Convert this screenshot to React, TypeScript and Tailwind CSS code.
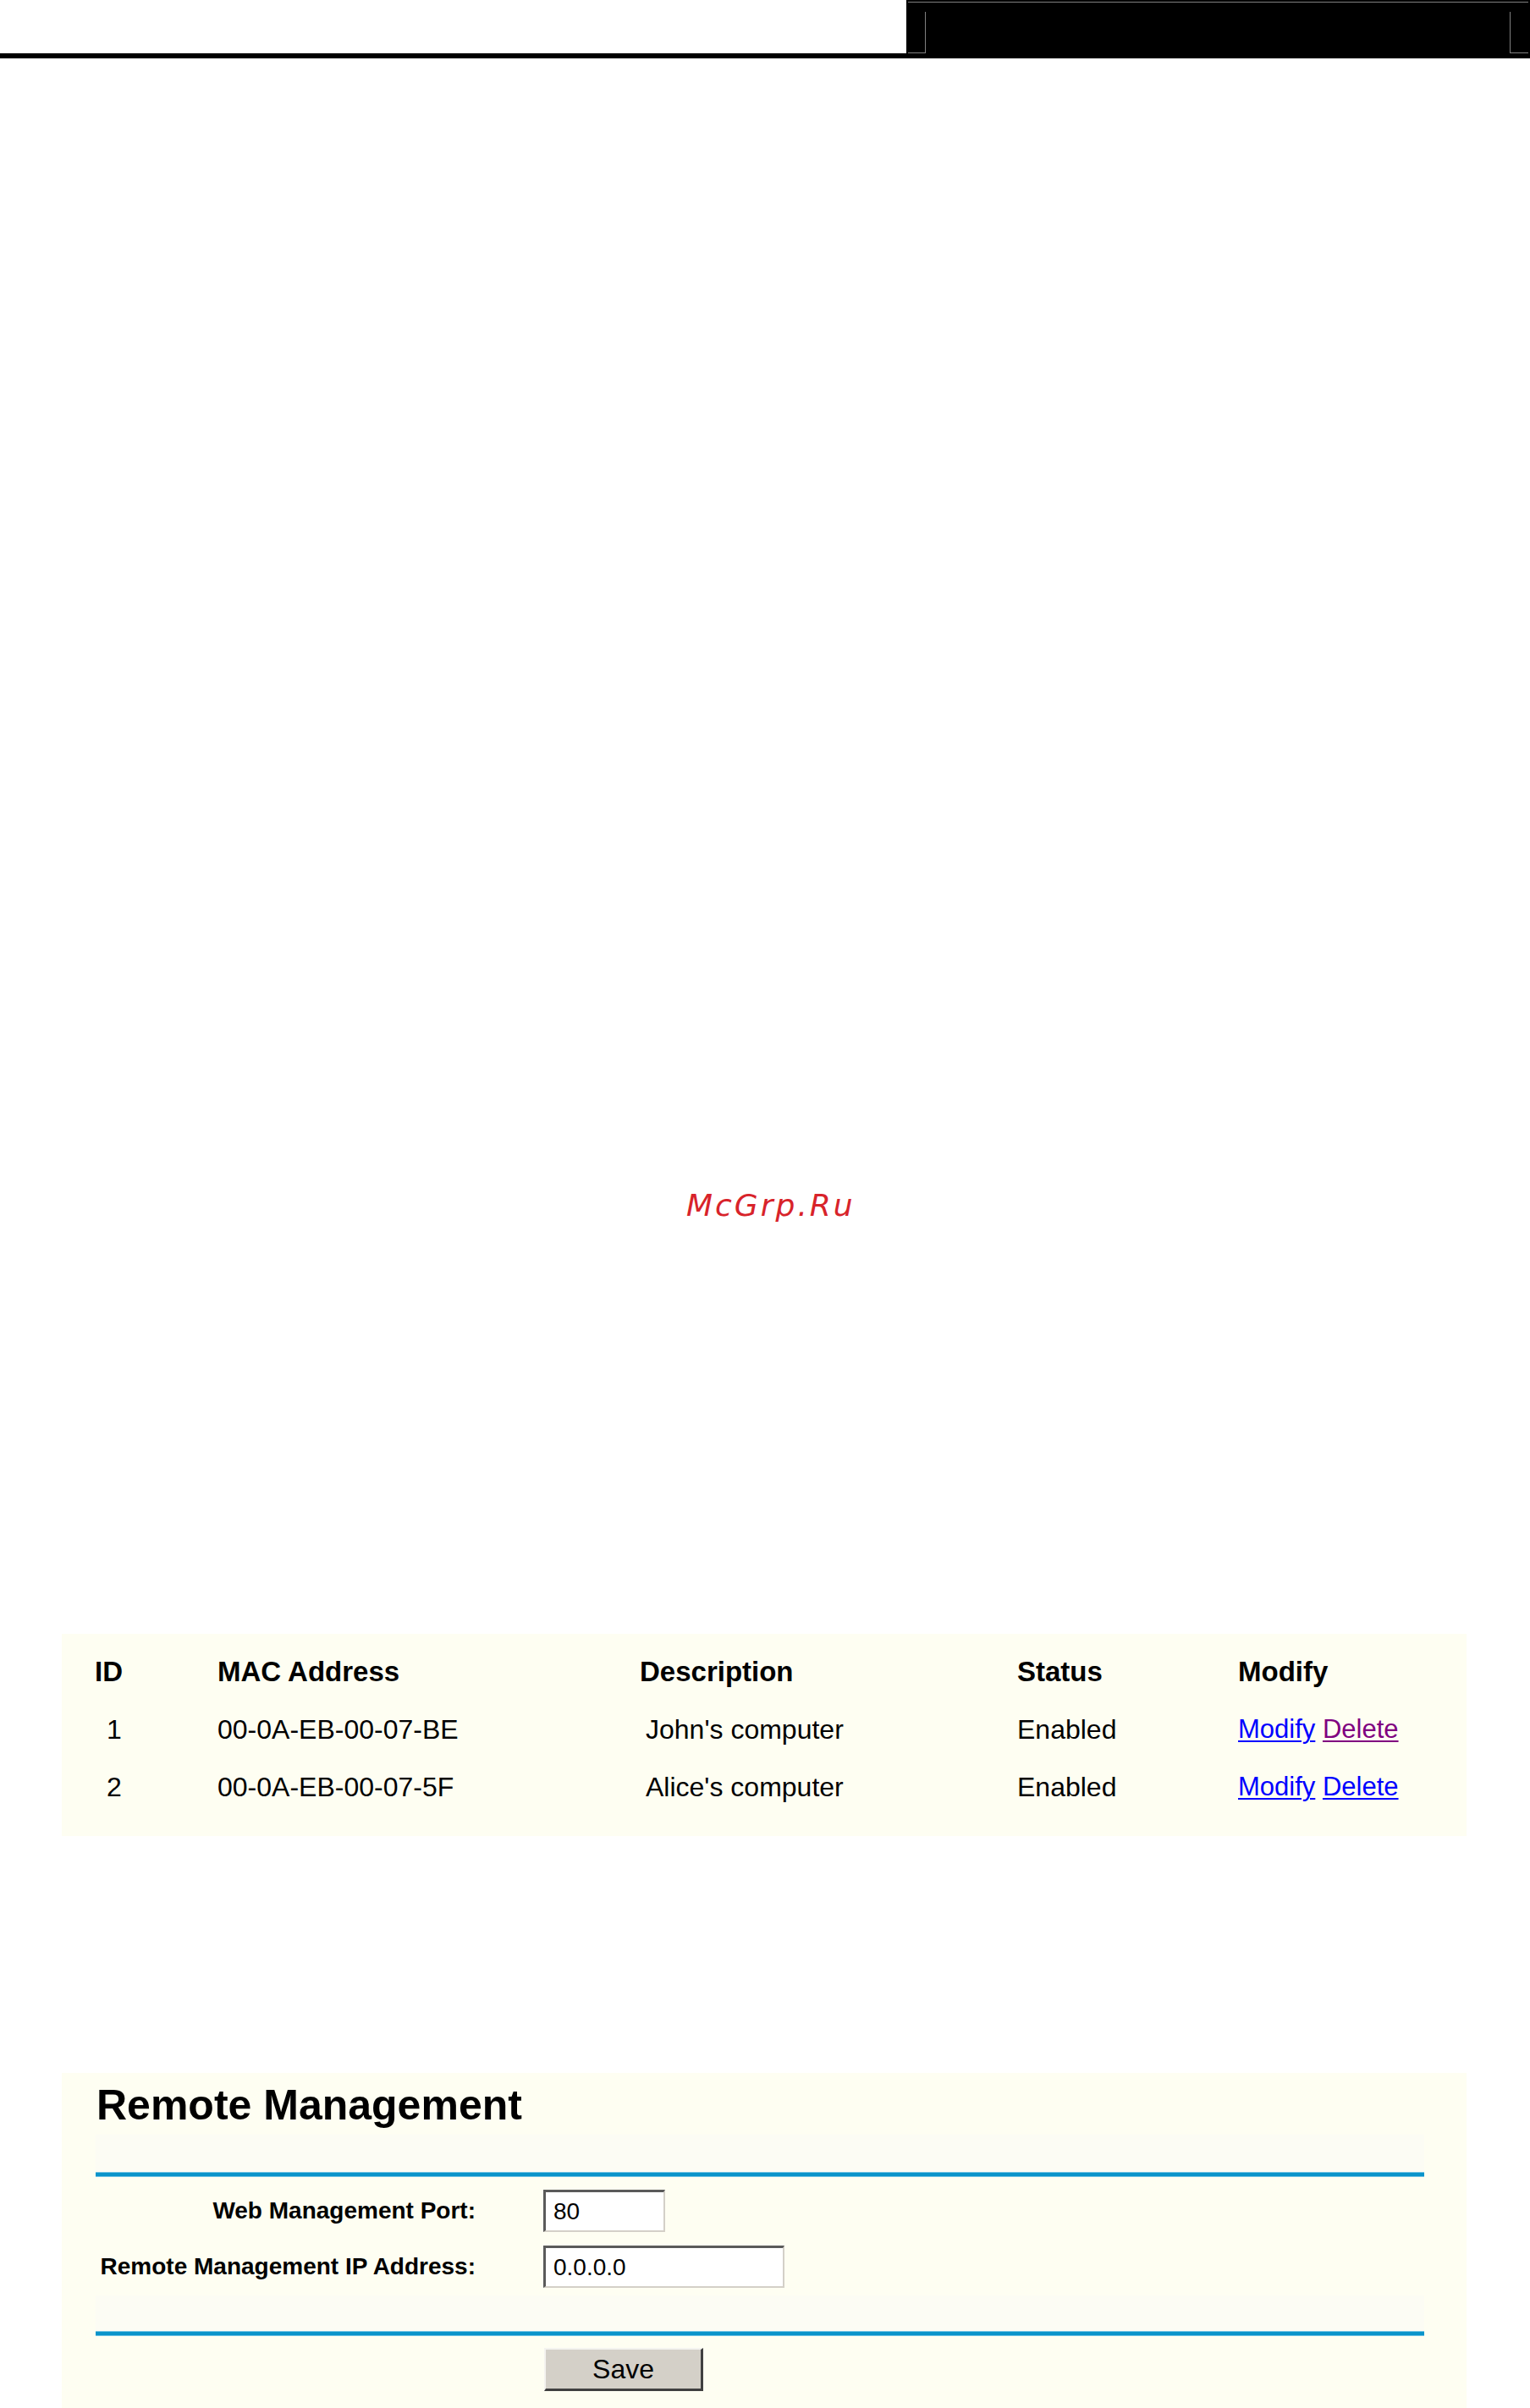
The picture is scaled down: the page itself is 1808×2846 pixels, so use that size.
import React from "react";

const BlueLine = () => (
  <div className="h-[6px] bg-[#0a94ca] border-y border-[#6fc1e3]" />
);

const cellFont = "font-['Liberation_Sans',Arial,sans-serif]";

export default function App() {
  const rows = [
    { id: "1", mac: "00-0A-EB-00-07-BE", desc: "John's computer", status: "Enabled", visited: true },
    { id: "2", mac: "00-0A-EB-00-07-5F", desc: "Alice's computer", status: "Enabled", visited: false },
  ];
  return (
    <div className={`w-[1808px] h-[2846px] bg-white text-black overflow-hidden ${cellFont}`}>
      {/* Top header bar */}
      <div className="flex h-[69px]">
        <div className="w-[1071px] h-[69px] border-b-[6px] border-black bg-white" />
        <div className="flex-1 h-[69px] bg-black flex flex-col">
          <div className="mt-[2px] mx-[2px] h-px bg-[#808080]" />
          <div className="mt-[11px] px-[2px] flex justify-between">
            <div className="w-[21px] h-[49px] border-r border-b border-[#808080]" />
            <div className="w-[22px] h-[49px] border-l border-b border-[#808080]" />
          </div>
        </div>
      </div>

      {/* Watermark */}
      <div className="h-[1338px]" />
      <div className="h-[36px] pl-[811px] text-[36px] leading-[36px] italic tracking-[3px] text-[#d8232a] font-['DejaVu_Sans',sans-serif]">
        McGrp.Ru
      </div>

      {/* Table panel */}
      <div className="mt-[488px] ml-[73px] w-[1660px] bg-[#fefef2] pt-[11px] pb-[24px] pl-[39px]">
        <div className="grid grid-cols-[145px_499px_446px_261px_1fr] auto-rows-[68px] items-center">
          <div className="text-[33px] font-bold">ID</div>
          <div className="text-[33px] font-bold">MAC Address</div>
          <div className="text-[33px] font-bold">Description</div>
          <div className="text-[33px] font-bold">Status</div>
          <div className="text-[33px] font-bold">Modify</div>
          {rows.map((r) => (
            <React.Fragment key={r.id}>
              <div className="text-[32px] pl-[14px]">{r.id}</div>
              <div className="text-[32px]">{r.mac}</div>
              <div className="text-[32px] pl-[7px]">{r.desc}</div>
              <div className="text-[32px]">{r.status}</div>
              <div className="text-[31px] whitespace-nowrap">
                <a className="text-[#0000ff] underline decoration-2 underline-offset-[3px] cursor-pointer">Modify</a>{" "}
                <a
                  className={`${r.visited ? "text-[#800080]" : "text-[#0000ff]"} underline decoration-2 underline-offset-[3px] cursor-pointer`}
                >
                  Delete
                </a>
              </div>
            </React.Fragment>
          ))}
        </div>
      </div>

      {/* Remote Management panel */}
      <div className="mt-[280px] ml-[73px] w-[1660px] h-[396px] bg-[#fefef2] pt-[13px]">
        <div className="pl-[41px] text-[50px] leading-[50px] font-bold">Remote Management</div>
        <div className="ml-[40px] w-[1570px]">
          <div className="mt-[10px] h-[44px] bg-[#fcfcf4]" />
          <BlueLine />
          <div className="pt-[15px] pb-[9px] flex flex-col gap-[16px]">
            <div className="flex items-center">
              <div className="w-[449px] text-right text-[28px] font-bold leading-none">Web Management Port:</div>
              <input
                readOnly
                value="80"
                className="ml-[80px] w-[144px] h-[50px] bg-white border-t-[3px] border-l-[3px] border-t-[#5a5a5a] border-l-[#5a5a5a] border-b-2 border-r-2 border-b-[#d4d0c8] border-r-[#d4d0c8] pl-[9px] text-[28px] text-black outline-none font-['Liberation_Sans',Arial,sans-serif]"
              />
            </div>
            <div className="flex items-center">
              <div className="w-[449px] text-right text-[28px] font-bold leading-none whitespace-nowrap">Remote Management IP Address:</div>
              <input
                readOnly
                value="0.0.0.0"
                className="ml-[80px] w-[285px] h-[50px] bg-white border-t-[3px] border-l-[3px] border-t-[#5a5a5a] border-l-[#5a5a5a] border-b-2 border-r-2 border-b-[#d4d0c8] border-r-[#d4d0c8] pl-[9px] text-[28px] text-black outline-none font-['Liberation_Sans',Arial,sans-serif]"
              />
            </div>
          </div>
          <div className="h-[42px] bg-[#fcfcf4]" />
          <BlueLine />
          <div className="mt-[14px] pl-[530px]">
            <button className="w-[188px] h-[51px] bg-[#d4d0c8] border-t-2 border-l-2 border-t-[#f4f3ef] border-l-[#f4f3ef] border-b-[3px] border-r-[3px] border-b-[#404040] border-r-[#404040] text-[32px] leading-none text-black font-['Liberation_Sans',Arial,sans-serif]">
              Save
            </button>
          </div>
        </div>
      </div>
    </div>
  );
}
